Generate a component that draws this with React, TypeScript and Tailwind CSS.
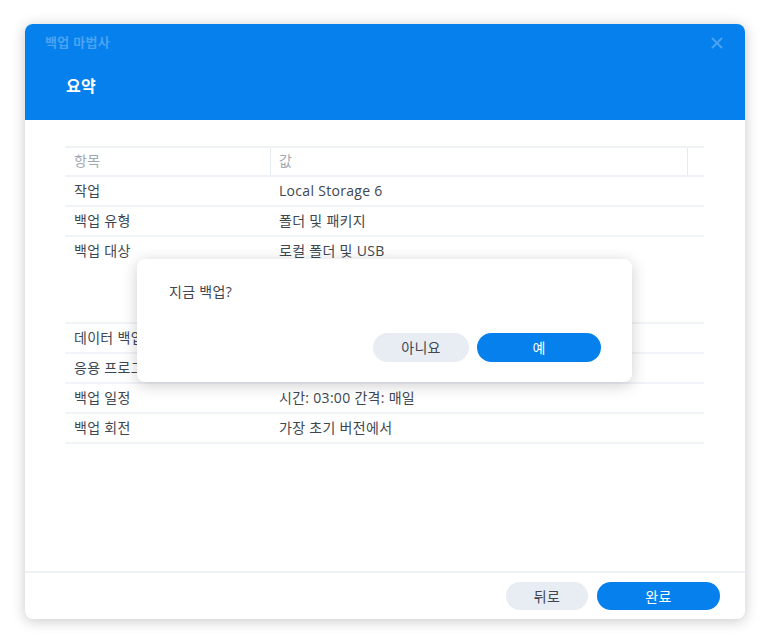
import React from 'react'

// values hidden behind the confirm dialog are left empty
const rows: { label: string; value: string; tall?: boolean }[] = [
  { label: '작업', value: 'Local Storage 6' },
  { label: '백업 유형', value: '폴더 및 패키지' },
  { label: '백업 대상', value: '로컬 폴더 및 USB', tall: true },
  { label: '데이터 백업', value: '' },
  { label: '응용 프로그램', value: '' },
  { label: '백업 일정', value: '시간: 03:00 간격: 매일' },
  { label: '백업 회전', value: '가장 초기 버전에서' },
]

export default function App() {
  return (
    <div
      className="relative w-[770px] h-[643px] bg-white pl-[25px] pt-[24px] text-[14px] tracking-[0.3px] text-[#3e4751]"
      style={{ fontFamily: '"Open Sans", "Noto Sans CJK KR", sans-serif' }}
    >
      {/* Wizard window */}
      <div className="w-[720px] h-[595px] flex flex-col rounded-lg bg-white shadow-[0_2px_14px_rgba(0,0,0,0.22)] overflow-hidden">
        <div className="h-[96px] bg-[#0580ec] flex flex-col">
          <div className="h-[38px] flex items-center justify-between pl-5 pr-[22px]">
            <span className="text-[13px] font-bold text-[#4ba3f2]">백업 마법사</span>
            <svg width="12" height="12" viewBox="0 0 12 12" className="text-[#4ba3f2]">
              <path d="M1.5 1.5l9 9M10.5 1.5l-9 9" stroke="currentColor" strokeWidth="2" strokeLinecap="round" />
            </svg>
          </div>
          <div className="pl-[41px] pt-[12px] text-[16px] font-bold text-white">요약</div>
        </div>

        <div className="flex-1 pt-[26px] pl-10 pr-[41px]">
          <div className="border-t-2 border-[#eef2f7]">
            <div className="flex h-[29px] items-center border-b-2 border-[#eef2f7] text-[#a0a8b1]">
              <div className="w-[205px] pl-[9px] pb-[2px]">항목</div>
              <div className="flex-1 h-full flex items-center pl-2 pb-[2px] border-l border-[#e6ebf1]">값</div>
              <div className="w-[17px] h-full border-l border-[#e6ebf1]" />
            </div>
            {rows.map((r) => (
              <div
                key={r.label}
                className={`flex border-b-2 border-[#f0f3f7] ${r.tall ? 'h-[87px] pt-[3px]' : 'h-[30px] items-center pb-[2px]'}`}
              >
                <div className="w-[205px] pl-[9px]">{r.label}</div>
                <div className="flex-1 pl-[9px]">{r.value}</div>
              </div>
            ))}
          </div>
        </div>

        <div className="h-[48px] border-t-2 border-[#eef2f7] flex items-center justify-end gap-[9px] pr-[25px]">
          <button className="w-[82px] h-[28px] rounded-full bg-[#e8edf4] text-[#3e4751]">뒤로</button>
          <button className="w-[123px] h-[28px] rounded-full bg-[#0580ec] text-white">완료</button>
        </div>
      </div>

      {/* Confirm dialog */}
      <div className="absolute left-[137px] top-[259px] w-[495px] h-[123px] rounded-lg bg-white shadow-[0_3px_16px_rgba(0,0,0,0.2)] flex flex-col pl-8 pr-[31px] pt-[22px] pb-5">
        <div className="text-[#3e4751]">지금 백업?</div>
        <div className="mt-auto flex justify-end gap-2">
          <button className="w-[96px] h-[29px] rounded-full bg-[#e8edf4] text-[#3e4751]">아니요</button>
          <button className="w-[124px] h-[29px] rounded-full bg-[#0580ec] text-white">예</button>
        </div>
      </div>
    </div>
  )
}
